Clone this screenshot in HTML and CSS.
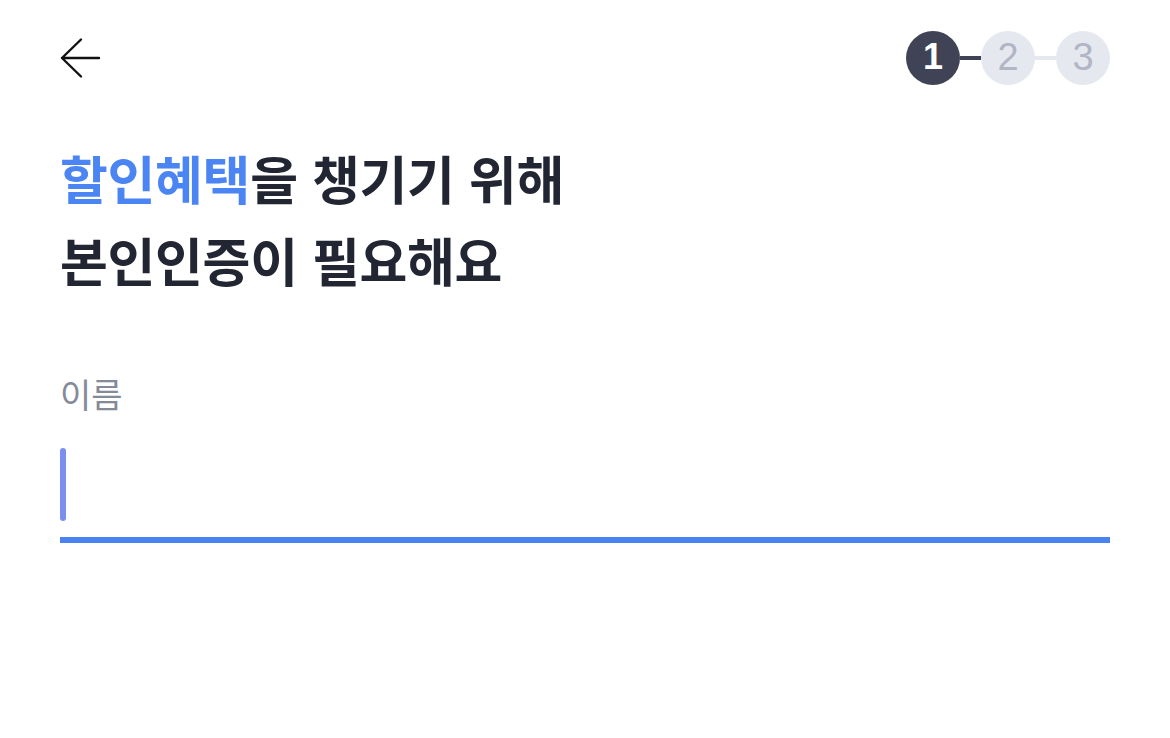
FILE: index.html
```html
<!DOCTYPE html>
<html lang="ko">
<head>
<meta charset="utf-8">
<link rel="stylesheet" href="styles.css">
</head>
<body>
<div class="page">
  <header class="topbar">
    <button class="back" aria-label="뒤로">
      <svg width="42" height="42" viewBox="0 0 42 42"><path d="M39 21H2M21 2.5L2 21l19 18.5" fill="none" stroke="#111" stroke-width="2.4" stroke-linecap="round" stroke-linejoin="round"/></svg>
    </button>
    <ol class="steps">
      <li class="step active">1</li>
      <li class="link active"></li>
      <li class="step">2</li>
      <li class="link"></li>
      <li class="step">3</li>
    </ol>
  </header>
  <h1 class="title"><span class="hl">할인혜택</span>을 챙기기 위해<br>본인인증이 필요해요</h1>
  <label class="label">이름</label>
  <div class="field"><span class="caret"></span></div>
</div>
</body>
</html>
```
FILE: styles.css
```css
* { box-sizing: border-box; }
html, body { margin: 0; padding: 0; background: #fff; }
body { font-family: "Noto Sans CJK KR", "Noto Sans", sans-serif; }
.page { padding: 31px 60px 0 60px; }
.topbar { display: flex; justify-content: space-between; align-items: center; height: 54px; }
.back { border: 0; background: none; padding: 0; margin: 0; width: 42px; height: 42px; display: flex; align-items: center; justify-content: center; }
.back svg { display: block; }
.steps { list-style: none; margin: 0; padding: 0; display: flex; align-items: center; }
.step { width: 54px; height: 54px; border-radius: 50%; background: #e6e8ef; color: #b1b5c4; font-family: "Liberation Sans", Arial, sans-serif; font-size: 38px; line-height: 1; display: flex; align-items: center; justify-content: center; padding-bottom: 2px; }
.step.active { background: #3f4355; color: #fff; font-weight: bold; font-size: 36px; }
.link { width: 21px; height: 4px; background: #e6e8ef; }
.link.active { background: #3f4355; }
.title { margin: 52px 0 0 0; font-size: 52px; line-height: 82px; font-weight: 700; color: #222633; letter-spacing: -0.3px; }
.hl { color: #4b84f3; }
.label { display: block; margin-top: 73px; font-size: 34px; line-height: 40px; color: #858a99; font-weight: 400; }
.field { margin-top: 34px; height: 95px; border-bottom: 6px solid #4a82f2; }
.caret { display: block; width: 6px; height: 73px; border-radius: 3px; background: #7b90ee; }
```
